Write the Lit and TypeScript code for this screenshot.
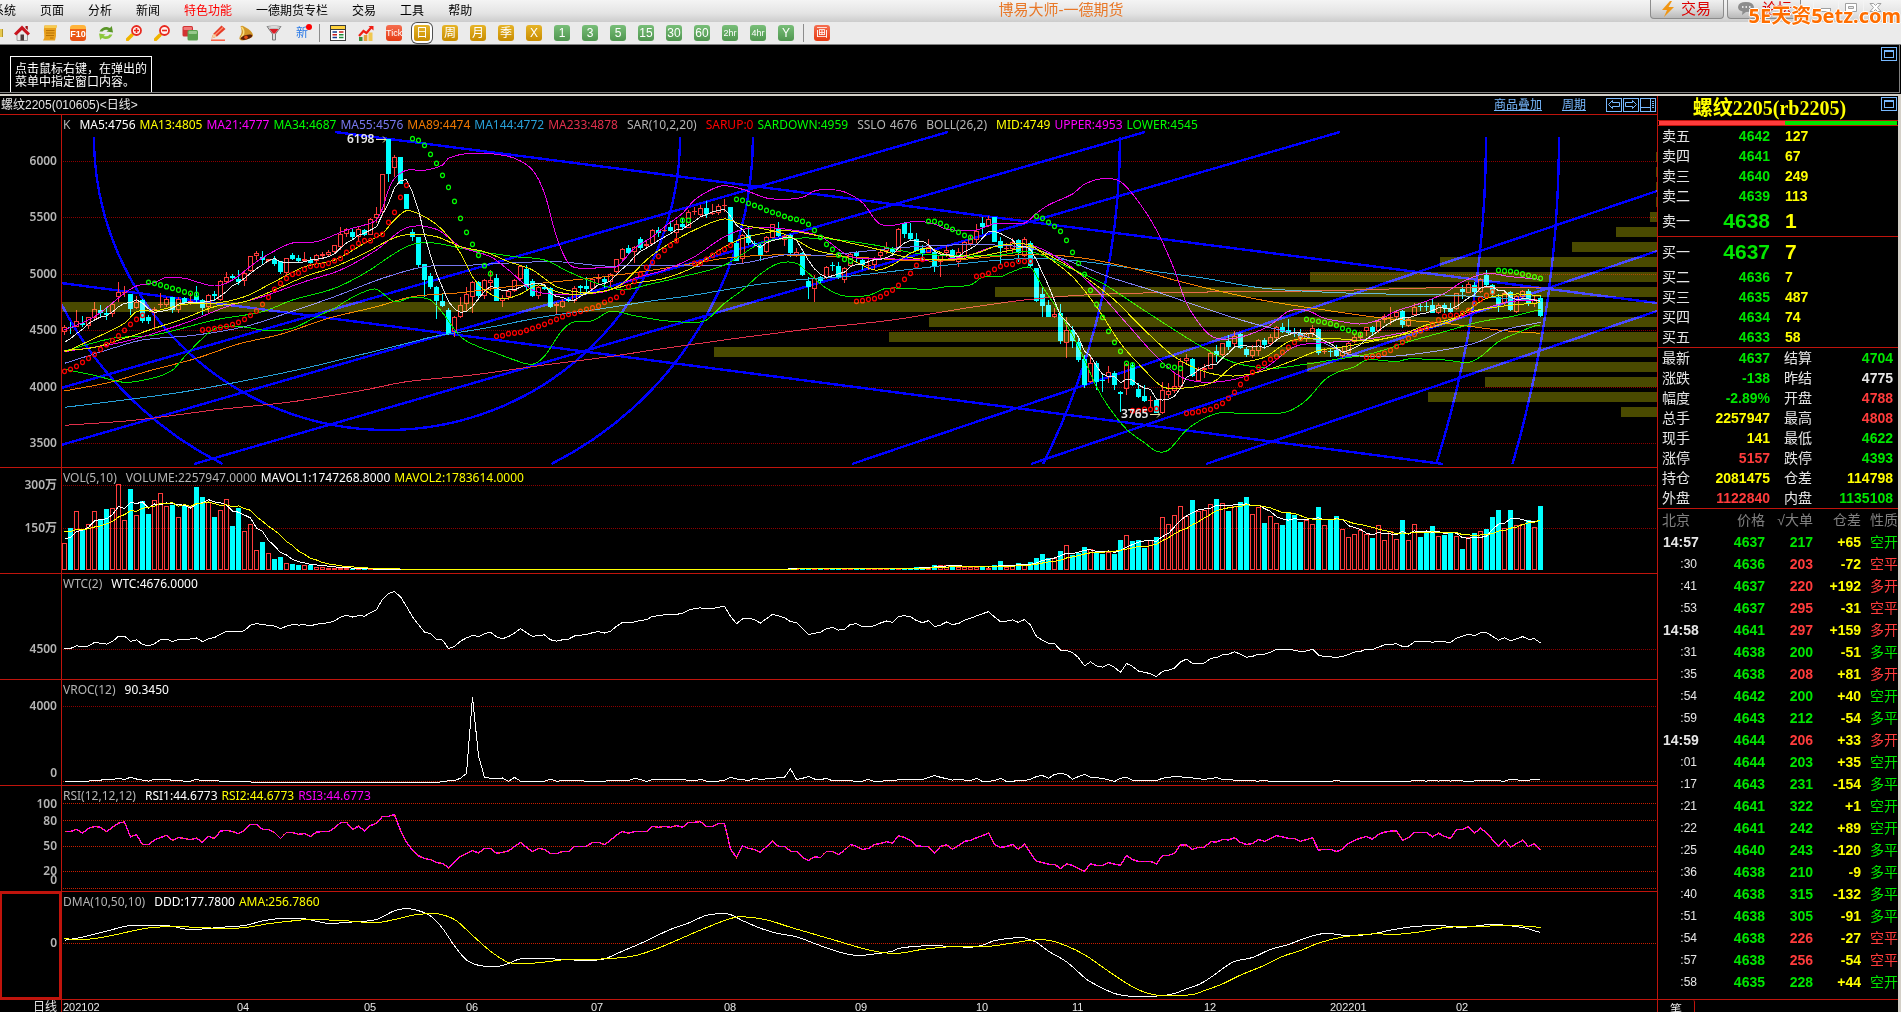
import { LitElement, html, svg, css, nothing } from "lit";
import { customElement, property } from "lit/decorators.js";

type Pt = [number, number];

const RED = "#ff3c3c";
const CYAN = "#00ffff";
const BARS = 247;

/* Bars are six pixels apart; traces are stored on finer vertical grids. */
const bx = (i: number) => 64.5 + 6 * i;
const py = (v: number) => 90 + v / 3;
const ly = (v: number) => 460 + v / 2.84;

/* Direction, body top, body bottom, wick top, wick bottom. */
const CANDLES = `r712 726 705 735|c711 713 697 731|r693 711 660 711|c698 704 679 710|r682 708 680 717|r658 684 637 686|c661 669 645 683|c669 676 655 690|r643 672 640 682|r606 622 576 637
r605 607 588 622|c612 657 612 676|r637 655 617 657|c630 692 628 698|c682 692 676 703|r658 668 652 720|r641 643 609 655|r626 645 622 650|c622 660 620 670|r626 661 620 670
c625 640 620 642|r633 640 608 645|c618 630 587 640|c630 654 628 675|r614 652 612 668|c612 618 603 632|r574 630 570 632|r561 575 546 580|c558 565 552 572|c567 575 540 584
r550 572 540 588|r499 543 497 545|r490 497 484 510|c502 510 482 522|r508 512 506 516|c507 521 499 528|c514 546 512 552|r505 548 503 560|c495 506 490 510|c505 512 496 515
r508 513 487 517|c510 518 500 523|r495 512 492 522|r491 499 487 503|r487 496 481 500|r466 486 464 488|r433 472 411 480|r418 431 415 441|c426 442 417 450|r418 442 412 455
c420 434 416 438|r388 434 385 436|r371 384 352 400|r253 367 251 377|c148 252 146 276|r202 233 195 262|c202 281 201 283|c312 357 312 357|c426 440 417 452|c441 524 440 530
c522 570 522 620|c558 590 550 598|c590 632 588 686|c634 648 610 652|c660 732 655 735|r681 725 678 740|r644 682 622 684|r613 643 590 665|r576 620 573 670|c576 617 572 630
r570 617 568 628|r570 580 540 602|c564 632 552 632|r623 632 615 650|r603 620 600 630|r570 604 568 606|r528 566 526 570|c538 590 524 600|c573 618 568 622|r591 617 587 628
c590 596 585 600|c594 651 590 655|r641 648 636 675|r632 650 628 655|c628 634 620 636|r594 634 588 638|c588 594 585 615|c588 598 560 610|r568 598 565 600|r565 568 552 578
c567 577 562 594|r553 577 550 590|r508 545 506 550|r478 507 475 510|c473 489 466 492|r470 485 468 518|c447 473 441 480|r462 468 450 475|r421 462 418 466|c420 430 410 440
r419 421 408 425|c411 424 392 425|r403 428 390 460|c402 412 385 418|r367 413 360 415|r364 366 350 375|r355 375 345 378|c353 372 333 384|r370 373 342 376|r347 370 343 376
r344 347 327 365|c351 456 351 460|c460 512 450 513|r435 506 432 520|c434 458 410 464|c458 462 452 472|c464 494 460 512|r442 487 438 488|r403 443 401 445|c415 437 397 440
r437 449 432 468|c435 490 432 500|r485 497 475 502|c489 555 486 558|c573 590 560 627|r563 598 555 635|c562 572 557 580|r532 565 529 568|c525 529 515 542|c527 563 515 567
r535 569 530 578|r492 528 488 530|c486 498 483 515|c510 525 505 540|r524 527 505 540|r507 525 500 540|r485 497 480 510|r472 484 456 492|c473 487 470 497|r418 485 414 487
c398 432 396 444|c429 447 400 450|c447 482 430 483|c474 488 465 510|r471 488 447 490|c486 530 480 545|r494 517 485 560|r480 490 465 500|c480 512 477 514|r486 517 475 530
r455 500 452 503|r447 463 437 467|r424 450 403 460|c400 410 382 433|r388 408 379 410|c382 455 380 456|c454 475 440 525|r474 476 460 490|r457 478 445 490|c450 488 448 515
r448 499 441 501|c460 527 452 530|c534 632 534 636|c612 648 590 680|c645 681 630 682|r673 682 655 685|c669 752 642 762|r720 758 680 805|c720 753 708 775|c756 809 740 815
c808 885 795 895|r820 876 800 880|c820 875 812 900|c870 872 855 905|r847 862 828 880|c850 886 842 900|c906 911 902 965|r822 896 820 914|c825 885 820 888|c897 920 878 925
c918 933 885 935|r930 933 918 955|c930 968 928 970|r901 970 876 972|r904 914 880 925|r889 902 845 910|r812 890 805 893|r805 813 793 820|c807 857 805 860|r838 874 830 876
r835 840 822 865|r788 836 785 838|c782 796 765 815|r760 795 758 797|c753 771 735 780|r737 762 722 768|c732 774 730 776|c777 795 770 800|r780 797 765 803|r751 783 748 797
c749 766 745 778|r741 762 732 765|r712 743 708 748|c712 725 700 730|c720 728 687 732|c728 731 715 742|c730 747 718 750|r730 746 725 755|r715 728 705 742|c718 788 714 795
r783 786 775 792|c782 785 775 800|c781 797 765 800|r782 797 770 803|r760 790 755 792|r741 756 735 760|r739 745 725 750|r712 722 710 738|c712 726 708 735|r692 724 690 730
r677 690 672 700|r680 683 652 705|r667 680 660 688|c663 704 660 715|r687 707 682 712|r650 674 640 678|c648 651 640 662|c648 651 633 662|c646 668 625 670|r646 668 640 672
c644 655 640 670|c655 666 640 670|r610 657 608 660|c597 606 585 628|r583 608 575 610|c586 605 575 620|r567 605 563 610|c556 584 540 588|c586 612 583 620|c622 642 612 665
r610 640 607 648|c606 660 604 662|r618 665 614 668|r604 620 600 630|c604 642 596 648|r626 643 615 650|c624 678 618 680`
  .split(/[|\n]/)
  .map((s) => {
    const [top, bottom, high, low] = s.slice(1).trim().split(" ").map(Number);
    return { up: s[0] === "r", top, bottom, high, low, close: s[0] === "r" ? top : bottom };
  });

const nums = (s: string) => s.trim().split(/\s+/).map(Number);

const VOLUME: number[] = [
  ...nums(`237 193 146 197 183 146 170 140 137 69 171 83 157 117 153 114 95 132 128 163 128 132 77 105 120 162 143 112 187 137
    203 183 257 234 265 281 276 293 296 298 297 297 303 305 306 306 306 307`),
  ...Array(73).fill(310),
  ...nums(`307 309 307 307 308 309 309 309 309 309 309 309 309 308 308 308 309 309 308 308 307 304 304 305 298 299 299 303 303
    304 304 303 303 306 299 288 303 302 293 298 290 278 267 278 278 258 242 270 263 247 254 262 267 262 267 228 214 230 227
    250 226 220 163 183 157 132 160 115 145 143 126 111 123 145 131 119 105 152 134 179 160 180 185 151 156 176 171 183 134
    186 171 159 197 220 211 199 211 222 186 228 203 223 170 228 183 219 208 187 217 212 207 217 253 220 207 203 196 162 142
    194 142 186 183 170 191 131`),
];

const RSI = nums(`1055 1055 1049 1060 1046 1041 1043 1055 1043 1031 1028 1070 1064 1092 1092 1079 1072 1066 1080 1072 1075 1078 1074 1086
  1069 1075 1054 1052 1055 1061 1052 1035 1035 1049 1049 1058 1075 1058 1058 1063 1061 1069 1057 1055 1055 1045 1030 1029 1049 1040
  1053 1038 1032 1012 1012 1007 1052 1085 1108 1124 1132 1135 1143 1146 1158 1142 1126 1117 1109 1116 1103 1103 1117 1114 1110 1098
  1086 1100 1112 1103 1106 1118 1118 1112 1112 1097 1097 1097 1086 1086 1092 1080 1065 1055 1060 1055 1055 1055 1041 1043 1041 1043
  1038 1043 1029 1029 1027 1041 1041 1032 1032 1105 1129 1096 1103 1106 1114 1098 1083 1097 1097 1111 1111 1129 1137 1127 1129 1112
  1112 1120 1109 1092 1097 1106 1103 1092 1089 1084 1088 1067 1072 1080 1096 1097 1098 1117 1097 1093 1105 1095 1083 1080 1073 1067
  1059 1092 1100 1098 1092 1106 1090 1117 1140 1143 1148 1148 1160 1147 1151 1160 1168 1147 1151 1151 1143 1148 1151 1123 1135 1140
  1140 1140 1147 1123 1123 1117 1093 1093 1106 1100 1100 1084 1085 1078 1079 1073 1086 1092 1089 1078 1083 1075 1067 1070 1075 1075
  1083 1078 1073 1108 1106 1106 1112 1106 1089 1080 1074 1069 1077 1063 1057 1054 1053 1080 1072 1058 1058 1058 1070 1060 1069 1075
  1049 1049 1041 1060 1046 1058 1078 1095 1078 1100 1089 1080 1098 1089 1109`);

const pairs = (s: string): Pt[] => s.trim().split(/\s+/).map((p) => p.split(",").map(Number) as Pt);

const CURVES: { color: string; at: Pt[] }[] = [
  { color: "#e0304c", at: pairs("0,1006 12,990 25,960 38,935 50,900 57,875 68,855 80,825 90,802 100,775 112,745 125,715 138,690 150,655 160,630 170,615 185,607 200,605 215,600 230,593 246,593") },
  { color: "#28a0d8", at: pairs("0,952 10,930 20,905 30,872 40,835 48,800 56,765 62,738 70,715 80,680 90,655 97,635 105,615 115,585 122,570 130,560 140,540 150,520 161,505 170,515 180,540 190,565 200,595 215,610 230,615 240,625 246,632") },
  { color: "#f07800", at: pairs("0,903 8,875 14,843 22,805 29,762 36,733 44,685 52,650 58,620 66,608 74,590 82,575 90,560 100,535 110,505 118,495 130,500 145,513 161,493 170,505 178,535 186,575 198,625 210,660 220,685 230,700 240,722 246,730") },
  { color: "#7878f0", at: pairs("0,820 8,775 13,750 22,735 30,710 37,670 45,620 53,565 60,530 66,527 73,520 82,515 90,528 98,525 106,528 113,520 120,495 127,495 138,475 146,466 155,465 161,475 167,510 174,560 182,605 190,655 198,700 206,735 210,760 214,793 220,800 228,785 235,760 240,720 246,697") },
  { color: "#00e600", at: pairs("0,783 8,745 15,735 25,690 33,665 38,630 45,595 50,550 57,470 61,458 67,478 75,500 80,510 84,545 88,575 93,600 97,585 103,560 110,525 116,460 120,446 127,446 135,465 142,490 150,498 156,495 161,485 167,530 173,580 179,650 185,720 190,775 195,818 201,835 206,825 212,808 218,790 224,755 230,725 236,695 241,680 246,658") },
  { color: "#e600e6", at: pairs("0,785 10,755 20,700 27,650 33,620 40,575 46,540 52,480 57,413 62,418 66,470 71,500 74,540 78,600 82,613 90,605 95,565 100,540 105,500 110,440 114,415 120,417 126,440 131,500 136,505 144,510 150,500 155,470 161,465 167,520 172,600 177,700 182,800 186,860 190,877 195,868 200,835 205,770 210,758 216,750 224,725 230,700 236,660 241,635 246,630") },
  { color: "#e6e600", at: pairs("0,787 5,745 10,700 12,665 15,663 20,643 25,640 30,620 35,575 40,530 45,510 50,460 53,430 55,390 57,362 60,380 63,420 66,490 68,560 70,600 73,626 76,612 79,585 82,605 85,613 90,603 93,580 97,510 100,470 105,420 110,387 113,405 118,422 121,440 125,480 130,500 135,540 138,525 141,490 144,475 148,500 152,490 155,470 158,462 161,465 163,490 168,560 172,650 176,760 180,840 183,890 186,895 190,885 192,870 195,825 200,802 204,755 207,745 212,746 217,752 222,738 227,705 231,688 234,660 237,625 242,612 246,618") },
  { color: "#e6e600", at: pairs("0,782 5,772 10,745 15,715 20,685 25,650 30,635 35,600 40,560 45,530 50,490 55,443 58,433 62,440 66,470 70,485 74,515 78,540 82,590 86,607 90,603 95,580 100,565 105,530 110,470 114,440 120,422 125,435 130,455 136,480 140,500 146,510 152,500 158,480 161,470 166,515 170,560 175,630 180,720 185,800 190,845 195,858 200,842 205,810 209,782 214,768 219,750 224,730 230,700 234,667 240,648 246,638") },
  { color: "#e600e6", at: pairs("0,720 5,680 10,610 12,588 15,578 17,562 20,565 25,588 28,570 32,515 35,483 38,459 42,455 47,420 50,405 52,390 53,355 54,300 55,265 57,241 60,241 63,225 64,205 67,191 71,191 75,205 78,240 80,310 82,440 84,520 86,535 90,532 92,530 95,475 98,440 100,410 103,370 105,330 108,297 110,287 113,298 117,324 120,328 123,322 125,303 127,298 130,306 133,338 136,403 142,394 145,402 147,418 152,420 155,401 160,399 162,370 164,345 168,312 170,283 173,266 176,275 179,335 182,420 185,540 187,640 190,720 192,745 195,745 198,730 201,705 204,664 207,661 210,685 213,695 216,702 219,690 222,663 226,640 230,610 233,575 237,550 241,560 246,568") },
  { color: "#00e600", at: pairs("0,838 5,856 10,877 15,863 18,840 20,800 23,745 25,717 28,708 31,714 34,722 38,715 42,680 45,655 47,632 50,605 52,598 55,635 58,622 61,630 63,668 66,740 69,770 72,790 75,810 78,823 80,798 83,720 85,695 88,692 91,664 95,677 100,692 105,697 107,690 110,640 113,600 116,552 119,520 122,520 124,550 127,595 130,618 134,616 137,595 144,598 147,590 151,585 153,562 156,560 158,545 161,533 163,590 166,672 169,770 172,890 174,950 177,1018 180,1058 182,1084 184,1080 187,1020 190,985 193,967 196,971 201,971 204,964 207,930 210,870 212,848 215,830 217,810 220,812 222,815 224,807 230,810 234,817 236,800 239,755 242,730 245,708 246,707") },
];

const SAR_DOWN: [number, number[]][] = [
  [14, nums("577 580 585 590 595 600 606 610 613")],
  [58, nums("146 151 166 193 220 256 292 334 385 427 463 496 527 551")],
  [103, nums("391 391")],
  [112, nums("328 331 340 346 352 361 367 372 379 385 388 394 403 421 442 463 478 495 508 513")],
  [144, nums("394 394 400 409 418 427 436 442")],
  [162, nums("379 385 397 409 424 451 487 520 553 601 643 682 724 757 784 820 825")],
  [183, nums("826 829 832 835")],
  [207, nums("688 691 694 697 701 706 715 721 727 733")],
  [239, nums("541 543 544 547 552 556 561 565")],
];
const SAR_UP: [number, number[]][] = [
  [0, nums("844 838 829 817 805 793 778 764 752 738 721 703 688 676")],
  [23, nums("720 718 716 712 709 704 697 688 676 663 643 622 598 580 565 553 549 538 529 526 526 520 512 505 487 472 460 452 452 436 433 397 367 322 286")],
  [72, nums("739 737 731 729 727 721 715 709 703 695 688 680 673 670 664 658 654 648 637 629 622 607 590 574 553 532 517 499 481 466 452")],
  [105, nums("520 519 508 496 487 478 466")],
  [132, nums("634 632 628 626 620 610 600 586 568 550 526 508")],
  [152, nums("559 556 550 538 529 523 523 514 514 514")],
  [178, nums("962 962 958 958 956")],
  [187, nums("970 968 965 961 958 949 940 925 907 883 865 847 832 820 808 800 787 772 757 745")],
  [217, nums("802 799 797 790 781 769 757 745 733 722 715 703 690 679 676 676 670 661 640 628 616 606")],
];

/* Left edge of every price-distribution band, from the top down. */
const BANDS = [1656, 1656, 1656, 1656, 1650, 1616, 1572, 1440, 1310, 995, 62, 929, 889, 714, 1307, 1485, 1428, 1621];

const TREND_LINES: [number, number, number, number][] = [
  [335, 132, 1657, 303],
  [61, 283, 1443, 464],
  [61, 388, 948, 132],
  [61, 445, 1145, 132],
  [194, 464, 1340, 132],
  [852, 464, 1657, 191],
  [1031, 464, 1657, 251],
  [1206, 464, 1657, 311],
];

const VROC = pairs(`0,912 4,912 5,910 8,907 9,904 10,907 11,901 12,906 14,912 15,907 17,908 20,912 21,912 22,907 23,911 24,909 26,912 30,913 32,916 62,916
  64,911 65,910 66,904 67,890 68,673 69,840 70,901 71,904 72,906 73,903 74,913 75,901 76,912 80,912 81,907 82,912 85,910 88,913 90,912 92,909 94,911
  95,904 96,907 97,913 98,907 103,908 105,911 106,907 107,912 109,912 110,910 111,901 112,906 114,910 115,904 116,907 118,904 120,901 121,877 122,907
  123,904 124,899 125,906 126,908 127,904 128,911 133,912 134,907 135,913 138,910 140,907 143,907 144,902 145,896 146,901 148,909 149,907 151,911
  152,904 153,913 155,911 156,904 157,913 160,910 161,907 162,899 163,896 164,904 165,893 166,890 167,893 168,907 169,899 170,893 171,901 173,904
  175,913 176,904 177,901 178,910 182,910 183,904 185,899 187,901 190,907 192,902 193,907 196,910 199,912 200,910 201,913 211,913 212,910 213,913
  224,913 225,910 227,912 228,910 229,912 230,910 231,912 232,910 234,913 236,910 240,912 241,907 243,910 246,907`);
const DDD = pairs(`0,1364 3,1355 7,1338 11,1322 15,1322 18,1324 20,1332 23,1332 26,1327 30,1322 33,1309 36,1302 40,1303 42,1310 44,1316 48,1312 52,1305
  55,1280 57,1274 59,1280 61,1295 63,1330 65,1380 67,1420 69,1435 71,1438 73,1436 76,1417 80,1416 87,1421 90,1417 92,1402 96,1373 101,1333 104,1315
  107,1293 110,1288 111,1291 113,1308 116,1330 119,1345 122,1354 125,1373 129,1397 132,1407 135,1403 138,1395 139,1387 143,1380 148,1381 151,1384
  153,1378 155,1365 159,1356 160,1357 162,1370 164,1395 167,1425 170,1470 171,1482 173,1500 175,1515 177,1522 180,1524 183,1521 185,1515 187,1502
  189,1490 191,1470 193,1445 195,1424 198,1413 201,1390 204,1376 206,1363 209,1347 211,1345 214,1351 218,1346 221,1335 225,1325 229,1322 233,1327
  238,1319 243,1328 246,1342`);
const AMA = pairs(`0,1360 4,1361 8,1350 12,1335 15,1327 20,1326 26,1330 30,1328 34,1317 38,1309 41,1305 47,1309 52,1314 55,1305 58,1293 60,1289 62,1288
  65,1305 68,1350 71,1395 74,1427 77,1430 80,1426 84,1418 90,1417 95,1408 99,1386 103,1357 107,1328 111,1302 113,1297 117,1306 121,1327 125,1347
  129,1367 133,1387 136,1398 139,1401 143,1390 148,1382 154,1381 158,1372 161,1364 164,1364 167,1380 170,1405 173,1440 176,1475 179,1505 182,1520
  185,1521 188,1518 190,1507 193,1488 196,1463 200,1435 203,1410 206,1393 209,1372 213,1355 218,1346 222,1347 226,1340 230,1328 234,1325 240,1323
  244,1324 246,1328`);

const straight = (pts: Pt[]) => "M" + pts.map(([x, y]) => `${x.toFixed(1)} ${y.toFixed(1)}`).join("L");

/* Catmull-Rom spline through the points. */
const smooth = (pts: Pt[]) => {
  let d = `M${pts[0][0]} ${pts[0][1]}`;
  for (let i = 0; i < pts.length - 1; i++) {
    const b = pts[i];
    const c = pts[i + 1];
    const a = pts[i - 1] ?? b;
    const e = pts[i + 2] ?? c;
    const w = (c[0] - b[0]) / 3;
    const m1 = (c[1] - a[1]) / (c[0] - a[0]);
    const m2 = (e[1] - b[1]) / (e[0] - b[0]);
    d += `C${(b[0] + w).toFixed(1)} ${(b[1] + m1 * w).toFixed(1)} ${(c[0] - w).toFixed(1)} ${(c[1] - m2 * w).toFixed(1)} ${c[0]} ${c[1].toFixed(1)}`;
  }
  return d;
};

/* Moving average; `seed` stands in for the bars before the first one. */
const average = (data: number[], n: number, seed: number) =>
  data.map((_, i) => {
    let sum = 0;
    for (let k = 0; k < n; k++) sum += data[i - k] ?? seed;
    return sum / n;
  });

const path = (d: string, color: string, width = 1) =>
  svg`<path d=${d} fill="none" stroke=${color} stroke-width=${width} shape-rendering="crispEdges"/>`;

const gridLines = (ys: number[], color: string) =>
  ys.map((y) => svg`<path d=${`M63 ${Math.floor(y) + 0.5}H1657`} stroke=${color} stroke-dasharray="1 1" shape-rendering="crispEdges"/>`);

const arc = (r: number) => {
  const cx = 387;
  const top = 137;
  if (r < 327) return `M${cx - r} ${top}A${r} ${r} 0 0 0 ${cx + r} ${top}`;
  const reach = Math.sqrt(r * r - 327 * 327);
  const right = `M${cx + r} ${top}A${r} ${r} 0 0 1 ${cx + reach} ${top + 327}`;
  return r < 400 ? `${right}M${cx - r} ${top}A${r} ${r} 0 0 0 ${cx - reach} ${top + 327}` : right;
};

const candle = (c: (typeof CANDLES)[number], i: number) => {
  const x = bx(i);
  const top = Math.round(py(c.top));
  const bottom = Math.max(Math.round(py(c.bottom)), top + 1);
  const wick = `M${x} ${Math.round(py(c.high))}V${top}M${x} ${bottom}V${Math.round(py(c.low))}`;
  return c.up
    ? svg`<path d=${wick} stroke=${RED}/>
        <rect x=${x - 2} y=${top + 0.5} width="4" height=${Math.max(bottom - top - 1, 0.01)} fill="none" stroke=${RED}/>`
    : svg`<path d=${wick} stroke=${CYAN}/><rect x=${x - 2.5} y=${top} width="5" height=${bottom - top} fill=${CYAN}/>`;
};

const dots = (groups: [number, number[]][], color: string) =>
  groups.map(([start, vs]) =>
    vs.map((v, k) => svg`<ellipse cx=${bx(start + k)} cy=${py(v)} rx="2" ry="2.3" fill="none" stroke=${color} stroke-width="1.2"/>`)
  );

const priceChart = () => svg`
  ${gridLines([161, 217, 274, 330, 387, 443], "#8c0000")}
  <g stroke="#0000ff" stroke-width="2.4" fill="none" shape-rendering="crispEdges">
    ${TREND_LINES.map(([a, b, c, d]) => svg`<path d=${`M${a} ${b}L${c} ${d}`}/>`)}
    ${[293, 366, 733, 1099, 1172].map((r) => svg`<path d=${arc(r)}/>`)}
  </g>
  <g shape-rendering="crispEdges">${CANDLES.map(candle)}</g>
  ${CURVES.map((c) => path(smooth(c.at.map(([i, v]): Pt => [bx(i), py(v)])), c.color))}
  ${path(straight(average(CANDLES.map((c) => c.close), 5, 768).map((v, i): Pt => [bx(i), py(v)])), "#e6e6e6")}
  ${dots(SAR_UP, "#ff0000")}
  ${dots(SAR_DOWN, "#00ff00")}
  <g class="bands" fill="#4a4a00">
    ${BANDS.map((x, k) => svg`<rect x=${x} y=${152 + 15 * k} width=${1657 - x} height="10"/>`)}
  </g>`;

const volumeChart = () => svg`
  ${gridLines([485, 528], "#8c0000")}
  <g shape-rendering="crispEdges">
    ${VOLUME.slice(0, BARS).map((v, i) => {
      const y = Math.round(ly(v));
      return CANDLES[i].up
        ? svg`<rect x=${bx(i) - 2} y=${y + 0.5} width="4" height=${Math.max(569 - y, 0.01)} fill="none" stroke=${RED}/>`
        : svg`<rect x=${bx(i) - 2.5} y=${y} width="5" height=${570 - y} fill=${CYAN}/>`;
    })}
  </g>
  ${path(straight(average(VOLUME, 5, 222).map((v, i): Pt => [bx(i), ly(v)])), "#ffffff")}
  ${path(straight(average(VOLUME, 10, 200).map((v, i): Pt => [bx(i), ly(v)])), "#ffff00")}`;

const wtcChart = () => svg`
  ${gridLines([649], "#8c0000")}
  ${path(straight(CANDLES.map((c, i): Pt => [bx(i), 649.4 + ((c.high + c.low + 2 * c.close) / 4 - 721) * 0.1144])), "#ffffff")}`;

const vrocChart = () => svg`
  ${gridLines([706], "#8c0000")}${gridLines([781], "#c81e00")}
  ${path(straight(VROC.map(([i, v]): Pt => [bx(i), ly(v)])), "#ffffff")}`;

const rsiChart = () => {
  const d = straight(RSI.map((v, i): Pt => [bx(i), ly(v)]));
  return svg`
    ${gridLines([803, 820, 846, 871, 888], "#c81e00")}
    <path d=${d} fill="none" stroke="#ff00ff" stroke-width="1.4" shape-rendering="crispEdges"/>
    <path d=${d} fill="none" stroke="#ff4646" stroke-width="1.4" stroke-dasharray="2 3" shape-rendering="crispEdges"/>`;
};

const dmaChart = () => svg`
  ${gridLines([943], "#c81e00")}
  ${path(smooth(DDD.map(([i, v]): Pt => [bx(i), ly(v)])), "#ffffff")}
  ${path(smooth(AMA.map(([i, v]): Pt => [bx(i), ly(v)])), "#ffff00")}`;

interface Panel {
  top: number;
  height: number;
  legend: [string, string, string?][];
  labels: [string, number][];
  draw: () => unknown;
  marks?: [string, number, number][];
  active?: boolean;
}

const G = "#b4b4b4";
const PANELS: Panel[] = [
  {
    top: 115,
    height: 352,
    legend: [
      ["K", G, "wide"],
      ["MA5:4756", "#ffffff"],
      ["MA13:4805", "#ffff00"],
      ["MA21:4777", "#ff00ff"],
      ["MA34:4687", "#00ff00"],
      ["MA55:4576", "#7878f0"],
      ["MA89:4474", "#f07800"],
      ["MA144:4772", "#28a0d8"],
      ["MA233:4878", "#e0304c", "wide"],
      ["SAR(10,2,20)", G, "wide"],
      ["SARUP:0", "#ff0000"],
      ["SARDOWN:4959", "#00ff00", "wide"],
      ["SSLO", G],
      ["4676", G, "wide"],
      ["BOLL(26,2)", G, "wide"],
      ["MID:4749", "#ffff00"],
      ["UPPER:4953", "#ff00ff"],
      ["LOWER:4545", "#00ff00"],
    ],
    labels: [["6000", 161], ["5500", 217], ["5000", 274], ["4500", 330], ["4000", 387], ["3500", 443]],
    marks: [["6198", 347, 139], ["3765", 1121, 414]],
    draw: priceChart,
  },
  {
    top: 468,
    height: 105,
    legend: [
      ["VOL(5,10)", G, "wide"],
      ["VOLUME:2257947.0000", G],
      ["MAVOL1:1747268.8000", "#ffffff"],
      ["MAVOL2:1783614.0000", "#ffff00"],
    ],
    labels: [["300万", 485], ["150万", 528]],
    draw: volumeChart,
  },
  { top: 574, height: 105, legend: [["WTC(2)", G, "wide"], ["WTC:4676.0000", "#ffffff"]], labels: [["4500", 649]], draw: wtcChart },
  { top: 680, height: 105, legend: [["VROC(12)", G, "wide"], ["90.3450", "#ffffff"]], labels: [["4000", 706], ["0", 773]], draw: vrocChart },
  {
    top: 786,
    height: 105,
    legend: [["RSI(12,12,12)", G, "wide"], ["RSI1:44.6773", "#ffffff"], ["RSI2:44.6773", "#ffff00"], ["RSI3:44.6773", "#ff00ff"]],
    labels: [["100", 804], ["80", 821], ["50", 846], ["20", 871], ["0", 880]],
    draw: rsiChart,
  },
  {
    top: 892,
    height: 107,
    legend: [["DMA(10,50,10)", G, "wide"], ["DDD:177.7800", "#ffffff"], ["AMA:256.7860", "#ffff00"]],
    labels: [["0", 943]],
    draw: dmaChart,
    active: true,
  },
];

const DATES: [string, number][] = [
  ["202102", 63], ["04", 237], ["05", 364], ["06", 466], ["07", 591], ["08", 724],
  ["09", 855], ["10", 976], ["11", 1072], ["12", 1204], ["202201", 1330], ["02", 1456],
];

const palette = css`
  .g { color: #00e600; }
  .r { color: #ff3c3c; }
  .y { color: #ffff00; }
  .w { color: #e6e6e6; }
`;

const windowIcon = svg`<svg width="16" height="14" viewBox="0 0 16 14" fill="none" stroke="#78b9ff" shape-rendering="crispEdges">
  <rect x="0.5" y="0.5" width="15" height="13"/><rect x="3.5" y="3.5" width="9" height="7"/><path d="M3 4.5H13"/></svg>`;

@customElement("chart-area")
class ChartArea extends LitElement {
  static styles = css`
    :host {
      display: flex;
      flex-direction: column;
      min-width: 0;
      color: #e6e6e6;
      font: 12px/14px "Noto Sans", "Noto Sans CJK SC", sans-serif;
    }
    header {
      display: flex;
      align-items: center;
      height: 18px;
      padding: 0 1px 0 1px;
      border-bottom: 1px solid #c0140c;
      font-family: "Liberation Sans", "Noto Sans CJK SC", sans-serif;
    }
    h2 { margin: 0 auto 0 0; font-size: 12px; font-weight: 400; line-height: 16px; white-space: nowrap; }
    a { color: #78b9ff; margin-right: 20px; line-height: 16px; }
    .tools { display: flex; gap: 1px; }
    .tools button { display: block; padding: 0; border: 0; background: none; height: 14px; width: 16px; }
    .panels {
      flex: 1;
      display: grid;
      grid-template-rows: 353fr 106fr 106fr 106fr 106fr 108fr;
      min-height: 0;
    }
    .panel { display: grid; grid-template-columns: 61px 1fr; border-bottom: 1px solid #c0140c; min-height: 0; }
    .scale { position: relative; }
    .scale.active { outline: 2px solid #c0140c; outline-offset: -2px; }
    .scale span { position: absolute; right: 4px; transform: translateY(-50%); color: #b4b4b4; font-weight: 600; }
    .plot { position: relative; border-left: 1px solid #c0140c; overflow: hidden; }
    .plot > svg { position: absolute; inset: 0; width: 100%; height: 100%; }
    .legend { position: relative; display: flex; gap: 4px; padding: 3px 0 0 1px; white-space: nowrap; }
    .wide { margin-right: 5px; }
    .mark { position: absolute; transform: translateY(-50%); font-weight: 600; color: #e6e6e6; display: flex; align-items: center; gap: 2px; }
    .bands { mix-blend-mode: screen; }
    footer {
      display: grid;
      grid-template-columns: 61px 1fr;
      height: 12px;
      overflow: hidden;
      font-family: "Liberation Sans", "Noto Sans CJK SC", sans-serif;
    }
    footer b { font-weight: 400; text-align: right; padding-right: 4px; }
    .dates { position: relative; border-left: 1px solid #c0140c; font-size: 11px; line-height: 14px; }
    .dates span { position: absolute; top: 0; }
  `;

  render() {
    return html`
      <header>
        <h2>螺纹2205(010605)&lt;日线&gt;</h2>
        <a href="#overlay">商品叠加</a>
        <a href="#period">周期</a>
        <div class="tools">
          <button aria-label="后退"><svg width="16" height="14" viewBox="0 0 16 14" fill="none" stroke="#78b9ff"><rect x="0.5" y="0.5" width="15" height="13"/><path d="M2.500 6.500L6.500 2.500V4.500H13.500V8.500H6.500V10.500Z"/></svg></button>
          <button aria-label="前进"><svg width="16" height="14" viewBox="0 0 16 14" fill="none" stroke="#78b9ff"><rect x="0.5" y="0.5" width="15" height="13"/><path d="M13.500 6.500L9.500 2.500V4.500H2.500V8.500H9.500V10.500Z"/></svg></button>
          <button aria-label="布局"><svg width="16" height="14" viewBox="0 0 16 14" fill="none" stroke="#78b9ff" shape-rendering="crispEdges"><rect x="0.5" y="0.5" width="15" height="13"/><path d="M10.500 1V13M1 9.500H10M12 3.500H14M12 5.500H14M12 7.500H14M12 9.500H14"/></svg></button>
        </div>
      </header>
      <div class="panels">
        ${PANELS.map(
          (p) => html`<section class="panel">
            <div class="scale ${p.active ? "active" : ""}">
              ${p.labels.map(([t, y]) => html`<span style="top:${((y - p.top) / p.height) * 100}%">${t}</span>`)}
            </div>
            <div class="plot">
              <svg viewBox="62 ${p.top} 1595 ${p.height}" preserveAspectRatio="none">${p.draw()}</svg>
              <div class="legend">
                ${p.legend.map(([t, c, k]) => html`<span class=${k ?? nothing} style="color:${c}">${t}</span>`)}
              </div>
              ${(p.marks ?? []).map(
                ([t, x, y]) => html`<span class="mark" style="left:${((x - 62) / 1595) * 100}%;top:${((y - p.top) / p.height) * 100}%">${t}
                  <svg width="11" height="7" viewBox="0 0 11 7" fill="none" stroke="#e6e6a0"><path d="M0 3.500H10M7 0.500L10 3.500L7 6.500"/></svg></span>`
              )}
            </div>
          </section>`
        )}
      </div>
      <footer>
        <b>日线</b>
        <div class="dates">${DATES.map(([t, x]) => html`<span style="left:${((x - 62) / 1595) * 100}%">${t}</span>`)}</div>
      </footer>
    `;
  }
}

const ASKS = [["卖五", "4642", "127"], ["卖四", "4641", "67"], ["卖三", "4640", "249"], ["卖二", "4639", "113"], ["卖一", "4638", "1"]];
const BIDS = [["买一", "4637", "7"], ["买二", "4636", "7"], ["买三", "4635", "487"], ["买四", "4634", "74"], ["买五", "4633", "58"]];
const STATS = `最新 4637 g 结算 4704 g
涨跌 -138 g 昨结 4775 w
幅度 -2.89% g 开盘 4788 r
总手 2257947 y 最高 4808 r
现手 141 y 最低 4622 g
涨停 5157 r 跌停 4393 g
持仓 2081475 y 仓差 114798 y
外盘 1122840 r 内盘 1135108 g`.split("\n").map((l) => l.split(" "));
const TICKS = `14:57 4637 217 g +65 空开 g
:30 4636 203 r -72 空平 r
:41 4637 220 r +192 多开 r
:53 4637 295 r -31 空平 r
14:58 4641 297 r +159 多开 r
:31 4638 200 g -51 多平 g
:35 4638 208 r +81 多开 r
:54 4642 200 g +40 空开 g
:59 4643 212 g -54 多平 g
14:59 4644 206 r +33 多开 r
:01 4644 203 g +35 空开 g
:17 4643 231 g -154 多平 g
:21 4641 322 g +1 空开 g
:22 4641 242 g +89 空开 g
:25 4640 243 g -120 多平 g
:36 4638 210 g -9 多平 g
:40 4638 315 g -132 多平 g
:51 4638 305 g -91 多平 g
:54 4638 226 r -27 空平 r
:57 4638 256 r -54 空平 r
:58 4635 228 g +44 空开 g`.split("\n").map((l) => l.split(" "));

@customElement("quote-panel")
class QuotePanel extends LitElement {
  static styles = [
    palette,
    css`
      :host {
        display: flex;
        flex-direction: column;
        border-left: 1px solid #c0140c;
        color: #e6e6e6;
        font: 14px/20px "Liberation Sans", "Noto Sans CJK SC", sans-serif;
      }
      header { display: grid; grid-template-columns: 1fr 16px; height: 24px; padding-right: 1px; }
      h2 {
        margin: 0;
        text-align: center;
        color: #ffff00;
        font: bold 20px/24px "Liberation Serif", "Noto Sans CJK SC", serif;
        white-space: nowrap;
      }
      header button { display: block; width: 16px; height: 14px; margin-top: 1px; padding: 0; border: 0; background: none; }
      .ratio { display: grid; grid-template-columns: 127fr 112fr; height: 4px; border: solid #c0140c; border-width: 1px 0; padding: 0 1px; }
      .ratio i:first-child { background: #ff3c3c; }
      .ratio i:last-child { background: #00e600; }
      table { border-collapse: collapse; table-layout: fixed; width: 100%; border-bottom: 1px solid #c0140c; }
      td, th { padding: 0; height: 20px; line-height: 20px; font-weight: 400; text-align: right; white-space: nowrap; }
      th { text-align: left; padding-left: 4px; }
      td { font-weight: 700; }
      .book td:last-child { text-align: left; padding-left: 15px; }
      .top td, .top th { height: 30px; line-height: 30px; }
      .top td { font-size: 21px; }
      .stats th + td + th { padding-left: 14px; }
      .stats td:last-child { padding-right: 5px; }
      .ticks { border: 0; }
      .ticks td, .ticks th { height: 22px; line-height: 22px; }
      .ticks thead th { color: #808080; text-align: right; padding: 0; }
      .ticks thead th:first-child { text-align: left; padding-left: 4px; }
      .ticks tbody th { font-size: 12px; text-align: right; padding: 0 9px 0 0; }
      .ticks tbody th.minute { font-size: 14px; font-weight: 700; text-align: left; padding: 0 0 0 5px; }
      .ticks tbody td:last-child { font-weight: 400; }
      .tabs { margin-top: auto; height: 12px; overflow: hidden; border-top: 1px solid #c0140c; }
      .tabs button {
        display: block;
        width: 37px;
        height: 18px;
        padding: 0;
        border: 0;
        border-right: 1px solid #c0140c;
        border-radius: 0 2px 0 0;
        background: none;
        color: #e6e6e6;
        font: 12px/14px "Noto Sans CJK SC", sans-serif;
      }
    `,
  ];

  private book(rows: string[][]) {
    return html`<table class="book">
      <colgroup><col width="52" /><col width="60" /><col /></colgroup>
      ${rows.map(
        ([n, p, v]) => html`<tr class=${n.endsWith("一") ? "top" : nothing}><th>${n}</th><td class="g">${p}</td><td class="y">${v}</td></tr>`
      )}
    </table>`;
  }

  render() {
    return html`
      <header><h2>螺纹2205(rb2205)</h2><button aria-label="还原">${windowIcon}</button></header>
      <div class="ratio"><i></i><i></i></div>
      ${this.book(ASKS)} ${this.book(BIDS)}
      <table class="stats">
        <colgroup><col width="37" /><col width="75" /><col width="47" /><col /></colgroup>
        ${STATS.map(([a, b, c, d, e, f]) => html`<tr><th>${a}</th><td class=${c}>${b}</td><th>${d}</th><td class=${f}>${e}</td></tr>`)}
      </table>
      <table class="ticks">
        <colgroup><col width="48" /><col width="59" /><col width="48" /><col width="48" /><col /></colgroup>
        <thead><tr><th>北京</th><th>价格</th><th>√大单</th><th>仓差</th><th>性质</th></tr></thead>
        <tbody>
          ${TICKS.map(
            ([t, p, v, c, d, n, k]) => html`<tr>
              <th class=${t.length > 3 ? "minute" : nothing}>${t}</th><td class="g">${p}</td><td class=${c}>${v}</td><td class="y">${d}</td><td class=${k}>${n}</td>
            </tr>`
          )}
        </tbody>
      </table>
      <div class="tabs"><button>笔</button></div>
    `;
  }
}

const icon = (body: unknown) => svg`<svg width="16" height="16" viewBox="0 0 16 16">${body}</svg>`;
const lens = (plus: boolean) => icon(svg`
  <path d="M1.500 14.500L6 10" stroke="#f0b400" stroke-width="3.500" stroke-linecap="round"/>
  <circle cx="10.500" cy="5.500" r="4.500" fill="#fff4f0" stroke="#e8281e" stroke-width="1.800"/>
  <path d=${plus ? "M8 5.500H13M10.500 3V8" : "M8 5.500H13"} stroke="#e8281e" stroke-width="1.600"/>`);

const ICONS: [string, unknown][] = [
  ["主页", icon(svg`<path d="M3 8V15.500H13.500V8L8 3.500Z" fill="#e8e8e8" stroke="#8c8c8c" stroke-width="0.800"/><path d="M0 8.500L8 0.500L16 8.500L13.800 10.500L8 5L2.200 10.500Z" fill="#c8141e"/><path d="M11.500 1H13.800V5L11.500 3Z" fill="#a01414"/><rect x="6.500" y="9.500" width="3.500" height="6" fill="#503c3c"/>`)],
  ["笔记", icon(svg`<path d="M2.500 0.500H15Q13.500 3 14 7T13 15.500H1Q3 13 2.200 9T2.500 0.500Z" fill="#e8a01e"/><path d="M2.500 0.500H15L14.500 3H2.500Z" fill="#f8cc50"/><path d="M4 5.500H12.500M4 8H12.500M4 10.500H12M8 13H11.500" stroke="#b46e00" stroke-width="0.900"/>`)],
  ["资料F10", html`<span class="chip f10">F10</span>`],
  ["刷新", icon(svg`<path d="M1.500 6.500Q4 1.500 9 2L12 3L13.800 1L15 7.500L8.500 6.500L10.500 5Q6 3.800 4.500 6.500Z" fill="#5a9628"/><path d="M14.500 9.500Q12 14.500 7 14L4 13L2.200 15L1 8.500L7.500 9.500L5.500 11Q10 12.200 11.500 9.500Z" fill="#8cc83c"/>`)],
  ["放大", lens(true)],
  ["缩小", lens(false)],
  ["叠加", icon(svg`<rect x="0.500" y="1" width="10.500" height="10.500" rx="1.500" fill="#d23232"/><rect x="1.500" y="2" width="8.500" height="3" rx="1" fill="#f07878"/><rect x="5.500" y="5" width="10.500" height="10.500" rx="1.500" fill="#5aa050"/><rect x="6.500" y="6" width="8.500" height="3" rx="1" fill="#96c88c"/>`)],
  ["画线", icon(svg`<path d="M1.500 13.500L3.500 8.500L11.500 0.500L15.500 4L7 11.500Z" fill="#e63c28"/><path d="M5 10L13 2.500" stroke="#ff9678" stroke-width="1.200"/><path d="M1.500 13.500L3.500 8.500L7 11.500Z" fill="#f5d2a0"/><path d="M1 15.200H15" stroke="#ff5032" stroke-width="1.400"/>`)],
  ["预警", icon(svg`<path d="M2.500 1.500Q4 0 6 1.500Q14 5.500 15 10Q15.500 12.500 9 14.500Q2 16.500 1.500 14Q1 12 3 9.500Q4.500 6 2.500 1.500Z" fill="#d29628"/><path d="M3.500 2Q6.500 5 5.500 9L3 13" stroke="#f8dc78" stroke-width="1.500" fill="none"/><ellipse cx="8.500" cy="12.200" rx="6" ry="2.200" transform="rotate(-16 8.500 12.200)" fill="#5a1e0a"/><circle cx="8" cy="12.200" r="1.800" fill="#e65014"/>`)],
  ["过滤", icon(svg`<path d="M1 1.500H15L9.500 9V15H6.500V9Z" fill="#dcdcdc" stroke="#787878"/><path d="M3.500 4H12.500L9 8.500H7Z" fill="#dc1e28"/><ellipse cx="8" cy="2" rx="6.800" ry="1.200" fill="#f0f0f0" stroke="#8c8c8c" stroke-width="0.600"/>`)],
  ["新闻", html`<span class="news">新</span>`],
];

const ICONS2: [string, unknown][] = [
  ["报价", icon(svg`<rect x="0.500" y="0.500" width="15" height="15" fill="#fff" stroke="#3c3c3c"/><rect x="1" y="1" width="14" height="3" fill="#ffd23c"/><path d="M1 4.500H15" stroke="#3c3c3c"/><path d="M2.500 7H7M2.500 12.500H7" stroke="#143c8c" stroke-width="1.400"/><path d="M2.500 9.800H7M9 7H13.500" stroke="#c81e1e" stroke-width="1.400"/><path d="M9 9.800H13.500M9 12.500H13.500" stroke="#1e8c3c" stroke-width="1.400"/>`)],
  ["走势", icon(svg`<rect x="1" y="12" width="3.500" height="4" fill="#3c8c3c"/><rect x="5.800" y="10" width="3.500" height="6" fill="#e6a03c"/><rect x="10.500" y="7.500" width="4" height="8.500" fill="#f0c850"/><path d="M1 11L5.500 6L8.500 8L14 1.500" fill="none" stroke="#f01e14" stroke-width="2.200"/><path d="M10.500 1H15.500V5.500Z" fill="#f01e14"/>`)],
];

const PERIODS: [string, string][] = [
  ["Tick", "orange"], ["日", "gold"], ["周", "gold"], ["月", "gold"], ["季", "gold"], ["X", "gold"],
  ["1", "green"], ["3", "green"], ["5", "green"], ["15", "green"], ["30", "green"], ["60", "green"],
  ["2hr", "green"], ["4hr", "green"], ["Y", "green"],
];

@customElement("app-root")
class AppRoot extends LitElement {
  @property() period = "日";

  static styles = css`
    :host {
      display: flex;
      flex-direction: column;
      min-height: 100vh;
      background: #000;
      overflow: hidden;
      font: 12px/16px "Liberation Sans", "Noto Sans CJK SC", sans-serif;
    }
    button { font: inherit; color: inherit; }
    .menubar { position: relative; display: flex; height: 22px; background: linear-gradient(#f4f4f4, #e4e4e4 60%, #cccccc); }
    nav { display: flex; gap: 24px; margin-left: -8px; }
    nav button { padding: 0; border: 0; background: none; color: #000; white-space: nowrap; }
    nav .hot { color: #ff0000; }
    h1 { margin: 0 auto; font-size: 15px; line-height: 20px; font-weight: 400; color: #e87828; }
    .actions { display: flex; gap: 3px; height: 19px; }
    .actions button {
      display: flex;
      align-items: center;
      gap: 6px;
      width: 74px;
      padding: 0 0 0 10px;
      border: 1px solid #8c8c8c;
      border-top: 0;
      border-radius: 0 0 4px 4px;
      background: linear-gradient(#f0f0f0, #dcdcdc 50%, #b9b9b9);
      color: #dc0000;
      font-size: 15px;
      line-height: 16px;
    }
    .actions svg { flex: none; }
    .window { display: flex; width: 100px; padding-left: 12px; box-sizing: border-box; }
    .window button { width: 25px; height: 17px; padding: 0; border: 0; border-left: 1px solid #f4f4f4; background: none; }
    .window svg { display: block; margin: 0 auto; }
    .brand {
      position: absolute;
      right: 0;
      top: 4px;
      font: bold 20px/24px "Noto Sans", "Noto Sans CJK SC", sans-serif;
      color: #ff6e00;
      text-shadow: 1px 0 #fff, -1px 0 #fff, 0 1px #fff, 0 -1px #fff;
      z-index: 1;
    }
    .toolbar { display: flex; align-items: center; height: 22px; background: #ebebeb; border-bottom: 1px solid #808080; }
    .edge { width: 3px; height: 8px; margin-right: 5px; background: #e6c850; border-right: 1px solid #b49628; box-sizing: border-box; }
    .toolbar button { display: flex; align-items: center; justify-content: center; width: 28px; height: 22px; padding: 0; border: 0; background: none; }
    .toolbar button[aria-pressed="true"] span { box-shadow: 0 0 0 2px #fff, 0 0 0 3px #505050; }
    .sep { width: 1px; height: 18px; margin: 0 4px 0 3px; background: #8c8c8c; }
    .chip {
      display: block;
      width: 16px;
      height: 16px;
      border-radius: 3px;
      color: #fff;
      font: 12px/16px "Liberation Sans Narrow", "Liberation Sans", "Noto Sans CJK SC", sans-serif;
      text-align: center;
      white-space: nowrap;
    }
    .small { font-size: 9px; }
    .f10 { background: linear-gradient(#ffb43c 25%, #f06414 25%, #e65014); font-size: 9px; font-weight: 700; line-height: 18px; }
    .gold { background: linear-gradient(#e6b428, #c88c00); }
    .green { background: linear-gradient(#78be78, #509650); }
    .orange { background: linear-gradient(#f56e50, #e63c14); }
    .news { position: relative; color: #2878e6; }
    .news::after { content: ""; position: absolute; right: -4px; top: -1px; width: 6px; height: 6px; border-radius: 50%; background: #ff0000; }
    .hint { display: flex; justify-content: space-between; align-items: flex-start; height: 47px; margin-right: 1px; border: solid #808080; border-width: 0 1px 1px 0; margin-bottom: 1px; }
    .hint p {
      margin: 11px 0 0 10px;
      padding: 6px 4px 3px;
      border: 1px solid #fff;
      border-bottom: 0;
      color: #fff;
      font-size: 12px;
      line-height: 13px;
    }
    .hint button { display: block; margin: 2px 2px 0 0; padding: 0; width: 16px; height: 14px; border: 0; background: none; }
    main { flex: 1; display: grid; grid-template-columns: 1fr 241px; border: solid #d4d0c8; border-width: 2px 3px 0 0; }
  `;

  render() {
    return html`
      <div class="menubar">
        <nav>
          ${["系统", "页面", "分析", "新闻", "特色功能", "一德期货专栏", "交易", "工具", "帮助"].map(
            (t) => html`<button class=${t === "特色功能" ? "hot" : nothing}>${t}</button>`
          )}
        </nav>
        <h1>博易大师-一德期货</h1>
        <div class="actions">
          <button><svg width="14" height="16" viewBox="0 0 14 16"><path d="M9 0L1 9H6L3 16L13 6H7.500L11 0Z" fill="#f09614"/></svg>交易</button>
          <button><svg width="18" height="14" viewBox="0 0 18 14"><path d="M8 0Q15 0 16 5Q16 10 8 10L4 13L4.500 9.500Q0 8.500 0 5Q0.500 0 8 0Z" fill="#8c8c8c"/><path d="M13 10Q17 9 17 7V11L17.500 13.500L14.500 12Z" fill="#a0a0a0"/><path d="M4 5H5.500M7.500 5H9M11 5H12.500" stroke="#fff" stroke-width="1.500"/></svg>论坛</button>
        </div>
        <div class="window">
          <button aria-label="最小化"><svg width="13" height="12" viewBox="0 0 13 12"><rect x="0.500" y="5.500" width="11" height="3" fill="#fff" stroke="#a0a0a0"/></svg></button>
          <button aria-label="还原"><svg width="12" height="12" viewBox="0 0 12 12" fill="#fff" stroke="#a0a0a0"><path d="M0.500 0.500H11.500V8.500H0.500ZM3.500 3.500V5.500H8.500V3.500Z" fill-rule="evenodd"/></svg></button>
          <button aria-label="关闭"><svg width="13" height="12" viewBox="0 0 13 12" fill="#fff" stroke="#a0a0a0"><path d="M1 0.500H4.500L6.500 2.500L8.500 0.500H12L8.500 4.500L12 8.500H8.500L6.500 6.500L4.500 8.500H1L4.500 4.500Z"/></svg></button>
        </div>
        <span class="brand">5E天资5etz.com</span>
      </div>
      <div class="toolbar">
        <i class="edge"></i>
        ${ICONS.map(([n, i]) => html`<button aria-label=${n}>${i}</button>`)}
        <i class="sep"></i>
        ${ICONS2.map(([n, i]) => html`<button aria-label=${n}>${i}</button>`)}
        ${PERIODS.map(
          ([t, c]) => html`<button aria-pressed=${t === this.period} @click=${() => (this.period = t)}>
            <span class="chip ${c} ${t.length > 2 ? "small" : ""}">${t}</span>
          </button>`
        )}
        <i class="sep"></i>
        <button><span class="chip orange">画</span></button>
      </div>
      <div class="hint">
        <p>点击鼠标右键，在弹出的<br />菜单中指定窗口内容。</p>
        <button aria-label="还原">${windowIcon}</button>
      </div>
      <main>
        <chart-area></chart-area>
        <quote-panel></quote-panel>
      </main>
    `;
  }
}
